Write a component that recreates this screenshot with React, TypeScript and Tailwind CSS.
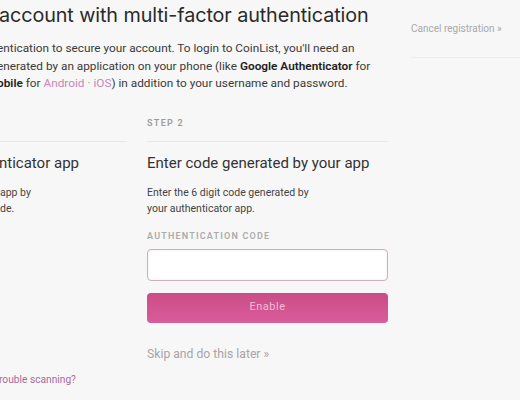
import React from "react";

export default function App() {
  return (
    <div className="w-[520px] h-[400px] overflow-hidden bg-[#f7f7f7] flex font-['Roboto',sans-serif]">
      <main className="w-[390px] shrink-0 pt-[1px] overflow-hidden">
        <h1 className="font-['Inter',sans-serif] text-[19.8px] leading-[28px] text-[#2a2a2a] whitespace-nowrap tracking-[-0.1px] -ml-[1px]">
          account with multi-factor authentication
        </h1>
        <p className="mt-[11px] text-[11.8px] leading-[17.5px] text-[#3a3a3a] whitespace-nowrap">
          <span className="block -ml-[3px]">entication to secure your account. To login to CoinList, you'll need an</span>
          <span className="block -ml-[3px]">enerated by an application on your phone (like <b className="font-semibold text-[#222]">Google Authenticator</b> for</span>
          <span className="block -ml-[3px]">
            <b className="font-semibold text-[#222]">obile</b> for <span className="text-[#c886b8]">Android</span>
            <span className="text-[#999]"> · </span>
            <span className="text-[#c886b8]">iOS</span>) in addition to your username and password.
          </span>
        </p>
        <div className="mt-[23px] grid grid-cols-[127px_241px] gap-x-[20px]">
          <div className="flex flex-col overflow-hidden">
            <div className="h-[26px] border-b border-[#e8e8e8]" />
            <h2 className="mt-[10px] text-[15px] leading-[22px] text-[#333] whitespace-nowrap -ml-[1px]">nticator app</h2>
            <p className="mt-[11px] text-[10.5px] leading-[16px] text-[#444] whitespace-nowrap">
              <span className="block">app by</span>
              <span className="block">de.</span>
            </p>
            <a className="mt-[156px] text-[10.2px] leading-[14px] text-[#a86a9c] whitespace-nowrap -ml-[1px]">rouble scanning?</a>
          </div>
          <div className="flex flex-col">
            <div className="h-[26px] border-b border-[#e8e8e8]">
              <span className="block text-[9px] leading-[14px] font-semibold tracking-[1.3px] text-[#9c9c9c]">STEP 2</span>
            </div>
            <h2 className="mt-[10px] text-[15px] leading-[22px] text-[#333] whitespace-nowrap">Enter code generated by your app</h2>
            <p className="mt-[11px] text-[10.5px] leading-[16px] text-[#444]">
              <span className="block">Enter the 6 digit code generated by</span>
              <span className="block">your authenticator app.</span>
            </p>
            <label className="mt-[12px] text-[9px] leading-[14px] font-semibold tracking-[1.2px] text-[#ababab] whitespace-nowrap">
              AUTHENTICATION CODE
            </label>
            <input
              type="text"
              className="mt-[6px] h-[32px] w-full rounded-[4px] bg-white border border-[#cdb0bf] shadow-[inset_0_0_2px_rgba(200,150,175,0.35)] outline-none px-2 text-[13px]"
            />
            <button className="mt-[12px] h-[30px] w-full rounded-[4px] bg-gradient-to-b from-[#cb4c86] to-[#d95c9b] text-[11px] tracking-[0.5px] text-[#f1bdd6]">
              Enable
            </button>
            <a className="mt-[22px] text-[12.2px] leading-[18px] text-[#aaa4a7] whitespace-nowrap">Skip and do this later »</a>
          </div>
        </div>
      </main>
      <aside className="ml-[21px] flex-1 pt-[22px]">
        <div className="pb-[21px] border-b border-[#eeeeee]">
          <a className="block text-[10px] leading-[14px] text-[#a9a9a9] whitespace-nowrap">Cancel registration »</a>
        </div>
      </aside>
    </div>
  );
}
